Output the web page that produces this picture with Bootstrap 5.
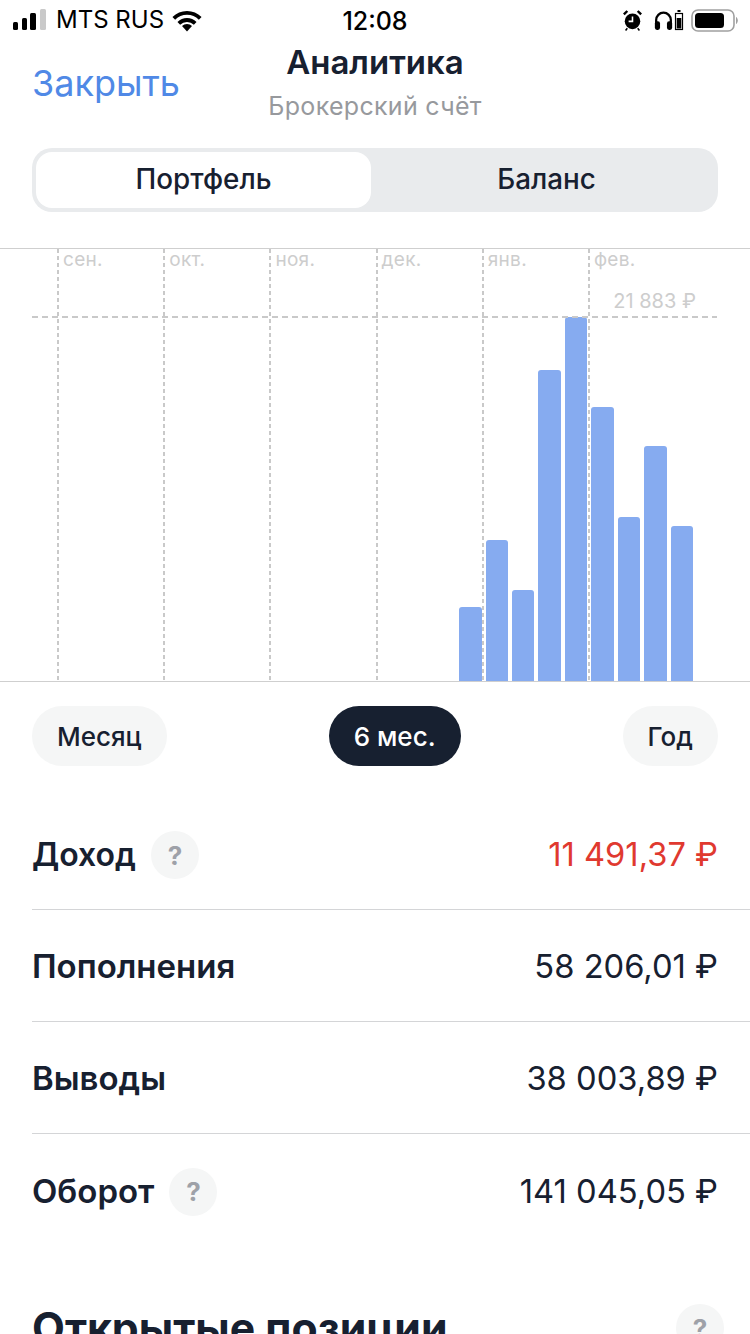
<!DOCTYPE html>
<html lang="ru">
<head>
  <meta charset="UTF-8">
  <meta name="viewport" content="width=device-width, initial-scale=1.0">
  <title>Аналитика</title>
  <link href="https://cdn.jsdelivr.net/npm/bootstrap@5.3.2/dist/css/bootstrap.min.css" rel="stylesheet">
  <style>
    html, body { height: 1334px; overflow: hidden; }
    body { font-family: Inter, "Liberation Sans", sans-serif; color: #172030; background: #fff; }
    .status-bar { height: 40px; padding: 0 12px; color: #000; position: relative; }
    .status-time { position: absolute; left: 0; right: 0; top: 3px; text-align: center; font-weight: 500; font-size: 25px; line-height: 36px; }
    .carrier { font-size: 24px; line-height: 36px; }
    .app-head { height: 108px; padding: 21px 32px 0; position: relative; }
    .close-link { font-size: 36px; line-height: 44px; color: #5089e6; text-decoration: none; display: block; width: max-content; }
    .head-title { position: absolute; left: 0; right: 0; top: 0; text-align: center; }
    .head-title h1 { font-size: 33px; font-weight: 600; line-height: 44px; margin: 0; }
    .head-title p { font-size: 25px; color: #97999d; line-height: 32px; margin: 6px 0 0; letter-spacing: .3px; }
    .segment { margin: 0 32px; height: 64px; background: #e9ebed; border-radius: 20px; padding: 4px; }
    .segment span { display: flex; align-items: center; justify-content: center; font-size: 27.8px; font-weight: 500; border-radius: 16px; }
    .segment .is-on { background: #fff; flex: 0 0 335px; }
    .segment .is-off { flex: 1 1 auto; padding-left: 8px; }
    .chart { margin-top: 36px; height: 434px; border-top: 1px solid #cfcfcf; border-bottom: 1px solid #cfcfcf; position: relative; padding-right: 57px; }
    .bar-item { width: 22.45px; background: #86abf0; border-radius: 3px 3px 0 0; }
    .chart-grid { position: absolute; inset: 0 0 0 57px; }
    .month-col { width: 106.2px; padding-left: 6px; font-size: 19px; line-height: 22px; color: #cdcdcd; letter-spacing: .3px;
      background: repeating-linear-gradient(to bottom, #c9c9c9 0 4px, transparent 4px 7px) left top / 2px 100% no-repeat; }
    .peak-line { position: absolute; left: 32px; right: 33px; top: 67px; height: 2px;
      background: repeating-linear-gradient(to right, #c9c9c9 0 6px, transparent 6px 10px); }
    .peak-label { position: absolute; right: 54px; top: 40px; font-size: 20px; line-height: 24px; color: #cdcdcd; }
    .range-row { padding: 24px 32px 0; }
    .range-pill { height: 60px; padding: 0 25px; border-radius: 30px; background: #f5f6f6; font-size: 26px; font-weight: 500; display: flex; align-items: center; }
    .range-pill.is-on { background: #172030; color: #fff; }
    .stat-list { margin-top: 32px; padding-left: 32px; }
    .stat-row { height: 112px; border-bottom: 1px solid #d4d5d7; padding-right: 32px; padding-top: 3px; }
    .stat-row:last-child { border-bottom: 0; }
    .stat-label { gap: 15px; }
    .stat-name { font-size: 33px; font-weight: 600; }
    .stat-name.is-first { font-size: 32px; }
    .stat-value { font-size: 32.7px; font-weight: 400; }
    .stat-value.loss { color: #e0392f; }
    .hint-dot { width: 48px; height: 48px; border-radius: 50%; background: #f5f6f6; color: #9ea1a8; font-size: 26px; font-weight: 700; display: flex; align-items: center; justify-content: center; flex: none; }
    .positions { padding: 56px 26px 0 32px; }
    .positions h2 { font-size: 42.7px; font-weight: 700; margin: 0; line-height: 52px; }
    .positions .hint-dot { margin-top: 2px; }
  </style>
</head>
<body>
  <div class="status-bar d-flex align-items-center justify-content-between">
    <div class="d-flex align-items-center">
      <svg width="36" height="22" viewBox="0 0 36 22">
        <rect x="1" y="13" width="5" height="8" rx="1.500" fill="#000"/>
        <rect x="10" y="9" width="5" height="12" rx="1.500" fill="#000"/>
        <rect x="18" y="4" width="6" height="17" rx="1.500" fill="#000"/>
        <rect x="28" y="0" width="6" height="21" rx="1.500" fill="#c9c9c9"/>
      </svg>
      <span class="carrier ms-2">MTS RUS</span>
      <svg width="30" height="23" viewBox="0 0 30 23" class="ms-2">
        <path d="M15 22.500l5-5.400a7 7 0 0 0-10 0z" fill="#000"/>
        <path d="M1.800 9.400a18.500 18.500 0 0 1 26.400 0M6.800 14.300a11.800 11.800 0 0 1 16.400 0" fill="none" stroke="#000" stroke-width="3.800"/>
      </svg>
    </div>
    <div class="status-time">12:08</div>
    <div class="d-flex align-items-center">
      <svg width="19" height="21" viewBox="0 0 22 24">
        <circle cx="11" cy="13" r="9" fill="#000"/>
        <path d="M11 7.500V13H6.500" fill="none" stroke="#fff" stroke-width="1.800"/>
        <path d="M1 5l4-4M21 5l-4-4" stroke="#000" stroke-width="2.800"/>
        <path d="M5 21l-2 2.500M17 21l2 2.500" stroke="#000" stroke-width="1.800"/>
      </svg>
      <svg width="19" height="21" viewBox="0 0 22 24" style="margin-left:12px">
        <path d="M2.500 16V11.500a8.500 8.500 0 0 1 17 0V16" fill="none" stroke="#000" stroke-width="2.600"/>
        <rect x="1" y="13" width="6" height="10" rx="2.500" fill="#000"/>
        <rect x="15" y="13" width="6" height="10" rx="2.500" fill="#000"/>
      </svg>
      <svg width="10" height="22" viewBox="0 0 10 22" style="margin-left:1px">
        <rect x="1.500" y="4.500" width="7" height="16" fill="none" stroke="#000" stroke-width="1.200"/>
        <rect x="2.700" y="9" width="4.600" height="10.500" fill="#000"/>
        <rect x="3.500" y="1" width="3" height="2" fill="#000"/>
      </svg>
      <svg width="47" height="23" viewBox="0 0 47 23" style="margin-left:7px">
        <rect x="1" y="1" width="42" height="21" rx="6" fill="none" stroke="#a0a0a0" stroke-width="1.600"/>
        <rect x="4" y="4" width="29" height="15" rx="3.500" fill="#000"/>
        <path d="M45 8c1.200.6 1.800 2 1.800 3.500s-.6 2.900-1.800 3.500z" fill="#a0a0a0"/>
      </svg>
    </div>
  </div>

  <div class="app-head">
    <a class="close-link" href="#">Закрыть</a>
    <div class="head-title">
      <h1>Аналитика</h1>
      <p>Брокерский счёт</p>
    </div>
  </div>

  <div class="segment d-flex">
    <span class="is-on">Портфель</span>
    <span class="is-off">Баланс</span>
  </div>

  <div class="chart d-flex align-items-end justify-content-end gap-1">
    <div class="bar-item" style="height:74px"></div>
    <div class="bar-item" style="height:141px"></div>
    <div class="bar-item" style="height:91px"></div>
    <div class="bar-item" style="height:311px"></div>
    <div class="bar-item" style="height:364px"></div>
    <div class="bar-item" style="height:274px"></div>
    <div class="bar-item" style="height:164px"></div>
    <div class="bar-item" style="height:235px"></div>
    <div class="bar-item" style="height:155px"></div>
    <div class="chart-grid d-flex">
      <div class="month-col">сен.</div>
      <div class="month-col">окт.</div>
      <div class="month-col">ноя.</div>
      <div class="month-col">дек.</div>
      <div class="month-col">янв.</div>
      <div class="month-col">фев.</div>
    </div>
    <div class="peak-line"></div>
    <div class="peak-label">21 883 ₽</div>
  </div>

  <div class="range-row d-flex justify-content-between">
    <div class="range-pill">Месяц</div>
    <div class="range-pill is-on">6 мес.</div>
    <div class="range-pill">Год</div>
  </div>

  <div class="stat-list">
    <div class="stat-row d-flex align-items-center justify-content-between">
      <div class="stat-label d-flex align-items-center"><span class="stat-name is-first">Доход</span><span class="hint-dot">?</span></div>
      <span class="stat-value loss">11 491,37 ₽</span>
    </div>
    <div class="stat-row d-flex align-items-center justify-content-between">
      <span class="stat-name">Пополнения</span>
      <span class="stat-value">58 206,01 ₽</span>
    </div>
    <div class="stat-row d-flex align-items-center justify-content-between">
      <span class="stat-name">Выводы</span>
      <span class="stat-value">38 003,89 ₽</span>
    </div>
    <div class="stat-row d-flex align-items-center justify-content-between">
      <div class="stat-label d-flex align-items-center"><span class="stat-name">Оборот</span><span class="hint-dot">?</span></div>
      <span class="stat-value">141 045,05 ₽</span>
    </div>
  </div>

  <div class="positions d-flex align-items-start justify-content-between">
    <h2>Открытые позиции</h2>
    <span class="hint-dot">?</span>
  </div>

  <script src="https://cdn.jsdelivr.net/npm/bootstrap@5.3.2/dist/js/bootstrap.bundle.min.js"></script>
</body>
</html>
